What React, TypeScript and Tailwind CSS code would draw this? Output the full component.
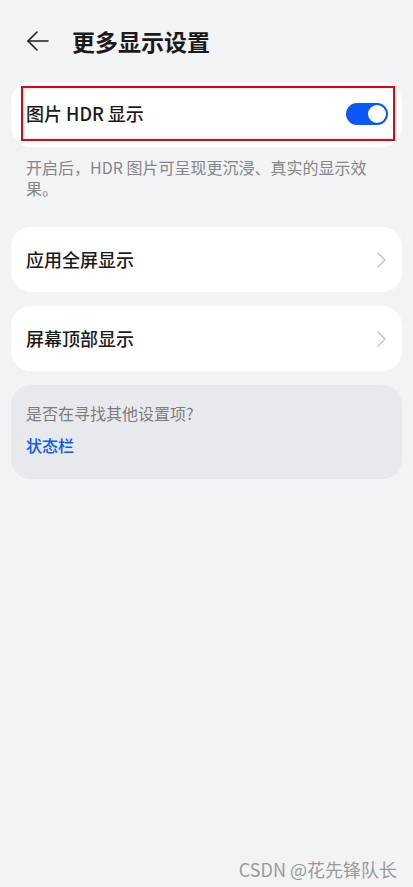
const font = { fontFamily: '"Noto Sans CJK SC", "Noto Sans", sans-serif' }

function Toggle() {
  return (
    <div className="w-[42px] h-[22px] rounded-full bg-[#0a59f7] flex items-center justify-end pr-[2px]">
      <div className="w-[18px] h-[18px] rounded-full bg-white" />
    </div>
  )
}

function Chevron() {
  return (
    <svg width="9" height="16" viewBox="0 0 9 16" fill="none" stroke="#c4c4c4" strokeWidth="1.5" strokeLinecap="round" strokeLinejoin="round">
      <path d="M1 1 L8 8 L1 15" />
    </svg>
  )
}

function LinkRow({ label, className }: { label: string; className?: string }) {
  return (
    <div className={`mx-[11px] h-[65px] rounded-[20px] bg-white flex items-center justify-between pl-[15px] pr-[16px] ${className ?? ''}`}>
      <span className="text-[18px] font-medium text-[#1a1a1a]">{label}</span>
      <Chevron />
    </div>
  )
}

export default function App() {
  return (
    <div className="min-h-[887px] bg-[#f1f3f5] flex flex-col" style={font}>
      {/* 顶部标题栏 */}
      <div className="h-[82px] flex items-center pl-[27px]">
        <svg width="22" height="20" viewBox="0 0 22 20" fill="none" stroke="#1f1f1f" strokeWidth="1.6" strokeLinecap="round" strokeLinejoin="round">
          <path d="M1 10 H21" />
          <path d="M10 1 L1 10 L10 19" />
        </svg>
        <h1 className="ml-[23px] text-[23px] font-bold text-[#1a1a1a]">更多显示设置</h1>
      </div>

      {/* HDR 开关 */}
      <div className="mx-[11px] h-[65px] rounded-[20px] bg-white pt-[4px] pl-[10px] pr-[7px]">
        <div className="h-[55px] border-2 border-[#e8000b] flex items-center justify-between pl-[3px] pr-[5px]">
          <span className="text-[18px] font-medium text-[#1a1a1a]">图片 HDR 显示</span>
          <Toggle />
        </div>
      </div>
      <p className="mt-[10px] pl-[26px] pr-[30px] text-[16px] leading-[21px] text-[#868686]">
        开启后，HDR 图片可呈现更沉浸、真实的显示效果。
      </p>

      <LinkRow label="应用全屏显示" className="mt-[28px]" />
      <LinkRow label="屏幕顶部显示" className="mt-[14px]" />

      {/* 搜索提示 */}
      <div className="mx-[11px] mt-[14px] h-[94px] rounded-[20px] bg-[#e8e9ec] pt-[18px] px-[15px]">
        <p className="text-[16px] leading-[21px] text-[#7d7d7d]">是否在寻找其他设置项?</p>
        <p className="mt-[11px] text-[16px] leading-[21px] font-medium text-[#0a59f7]">状态栏</p>
      </div>

      <div className="mt-auto self-end mr-[16px] mb-[6px] text-[18px] leading-[24px] text-[#9a9a9a]">
        CSDN @花先锋队长
      </div>
    </div>
  )
}
